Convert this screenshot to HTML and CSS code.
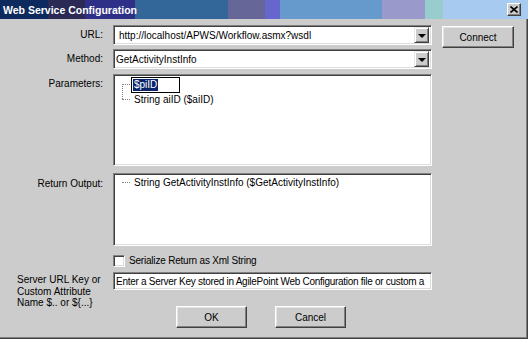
FILE: index.html
```html
<!DOCTYPE html>
<html lang="en">
<head>
  <meta charset="UTF-8">
  <title>Web Service Configuration</title>
  <link rel="stylesheet" href="styles.css">
</head>
<body>
<div class="window">
  <div class="titlebar">
    <span class="title">Web Service Configuration</span>
    <span class="close">
      <svg width="8" height="7" viewBox="0 0 8 7"><path d="M0.5 0.5 L7.5 6.5 M7.5 0.5 L0.5 6.5" stroke="#000" stroke-width="1.6"/></svg>
    </span>
  </div>

  <div class="dialog">
    <!-- URL -->
    <div class="row row-url">
      <div class="lbl">URL:</div>
      <div class="field combo">
        <span class="combo-text url-text">http://localhost/APWS/Workflow.asmx?wsdl</span>
        <span class="drop"><i></i></span>
      </div>
      <button class="btn btn-connect">Connect</button>
    </div>

    <!-- Method -->
    <div class="row row-method">
      <div class="lbl">Method:</div>
      <div class="field combo">
        <span class="combo-text">GetActivityInstInfo</span>
        <span class="drop"><i></i></span>
      </div>
    </div>

    <!-- Parameters -->
    <div class="row row-params">
      <div class="lbl lbl-top lbl-params">Parameters:</div>
      <div class="field tree">
        <div class="branch">
          <div class="node">
            <span class="twig"></span>
            <span class="edit"><span class="sel">$piID</span></span>
          </div>
          <div class="node">
            <span class="twig"></span>
            <span class="node-text">String aiID ($aiID)</span>
          </div>
        </div>
      </div>
    </div>

    <!-- Return -->
    <div class="row row-return">
      <div class="lbl lbl-top lbl-return">Return Output:</div>
      <div class="field tree tree-return">
        <div class="node">
          <span class="twig"></span>
          <span class="node-text">String GetActivityInstInfo ($GetActivityInstInfo)</span>
        </div>
      </div>
    </div>

    <!-- Serialize -->
    <div class="row row-check">
      <div class="lbl"></div>
      <label class="check"><span class="box"></span>Serialize Return as Xml String</label>
    </div>

    <!-- Server key -->
    <div class="row row-server">
      <div class="lbl lbl-server">Server URL Key or<br>Custom Attribute<br>Name $.. or ${...}</div>
      <div class="field input">Enter a Server Key stored in AgilePoint Web Configuration file or custom a</div>
    </div>

    <div class="row row-actions">
      <button class="btn btn-ok">OK</button>
      <button class="btn btn-cancel">Cancel</button>
    </div>
  </div>
</div>
</body>
</html>
```

FILE: styles.css
```css
* {
  box-sizing: border-box;
}

body {
  margin: 0;
  padding: 0;
  font-family: 'Liberation Sans', Arial, sans-serif;
  font-size: 10px;
  color: #000;
  background: #cccccc;
}

.window {
  width: 528px;
  height: 339px;
  background: #cccccc;
  box-shadow: inset -1px -1px #404040, inset -2px -2px #808080;
  overflow: hidden;
}

/* title bar - the odd colour bands come from the palette */
.titlebar {
  height: 19px;
  display: flex;
  align-items: center;
  padding-left: 3px;
  background: linear-gradient(to right,
    #0c2a5e 0, #0c2a5e 48px,
    #2a2a55 48px, #2a2a55 85px,
    #2e3088 85px, #2e3088 135px,
    #336699 135px, #336699 228px,
    #666699 228px, #666699 265px,
    #6666cc 265px, #6666cc 280px,
    #6699cc 280px, #6699cc 382px,
    #9999cc 382px, #9999cc 425px,
    #99cccc 425px, #99cccc 443px,
    #a6caf0 443px, #a6caf0 100%);
}

.title {
  color: #fff;
  font-weight: bold;
  font-size: 10.5px;
}

.close {
  margin-left: auto;
  margin-right: 7px;
  width: 14px;
  height: 13px;
  display: flex;
  align-items: center;
  justify-content: center;
  background: #cccccc;
  border-top: 1px solid #fff;
  border-left: 1px solid #fff;
  border-right: 1px solid #404040;
  border-bottom: 1px solid #404040;
  box-shadow: inset -1px -1px #808080;
}

.dialog {
  display: flex;
  flex-direction: column;
}

.row {
  display: flex;
  align-items: flex-start;
}

.lbl {
  width: 113px;
  flex: none;
  padding-right: 10px;
  text-align: right;
  line-height: 20px;
  white-space: nowrap;
}

.lbl-top {
  line-height: 13px;
}

.lbl-params {
  padding-top: 3px;
}

.lbl-return {
  padding-top: 4px;
}

.lbl-server {
  text-align: left;
  padding-left: 17px;
  padding-top: 2px;
  line-height: 11.6px;
}

/* sunken field */
.field {
  width: 319px;
  flex: none;
  background: #fff;
  border-top: 1px solid #808080;
  border-left: 1px solid #808080;
  border-right: 1px solid #fff;
  border-bottom: 1px solid #fff;
  box-shadow: inset 1px 1px #404040, inset -1px -1px #dcdcdc;
}

.row-url {
  margin-top: 6px;
  height: 20px;
}

.row-method {
  margin-top: 4px;
  height: 20px;
}

.combo {
  height: 20px;
  display: flex;
  align-items: center;
  padding: 2px;
}

.combo-text {
  flex: 1;
  white-space: nowrap;
  overflow: hidden;
}

.url-text {
  padding-left: 3px;
}

.drop {
  width: 15px;
  height: 16px;
  flex: none;
  display: flex;
  align-items: center;
  justify-content: center;
  background: #cccccc;
  border-top: 1px solid #e8e8e8;
  border-left: 1px solid #e8e8e8;
  border-right: 1px solid #404040;
  border-bottom: 1px solid #404040;
  box-shadow: inset 1px 1px #fff, inset -1px -1px #808080;
}

.drop i {
  width: 0;
  height: 0;
  border-left: 4px solid transparent;
  border-right: 4px solid transparent;
  border-top: 4px solid #000;
  margin-top: 1px;
}

/* raised buttons */
.btn {
  font-family: inherit;
  font-size: 10px;
  color: #000;
  background: #cccccc;
  padding: 0;
  border-top: 1px solid #fff;
  border-left: 1px solid #fff;
  border-right: 1px solid #404040;
  border-bottom: 1px solid #404040;
  box-shadow: inset -1px -1px #808080, inset 1px 1px #e4e4e4;
}

.btn-connect {
  margin-left: 10px;
  margin-top: 1px;
  width: 72px;
  height: 22px;
}

/* tree views */
.row-params {
  margin-top: 5px;
}

.tree {
  height: 92px;
  padding: 2px 0 0 8px;
}

.branch {
  position: relative;
}

/* vertical connector between the nodes */
.branch::before {
  content: "";
  position: absolute;
  left: 0;
  top: 7px;
  height: 15px;
  border-left: 1px dotted #808080;
}

.node {
  display: flex;
  align-items: center;
  height: 15px;
  white-space: nowrap;
}

.twig {
  width: 8px;
  flex: none;
  border-top: 1px dotted #808080;
  margin-right: 1px;
}

.node-text {
  padding-left: 3px;
}

.edit {
  width: 49px;
  height: 16px;
  border: 1px solid #000;
  background: #fff;
  padding: 1px 0 0 1px;
  line-height: 12px;
}

.sel {
  display: inline-block;
  background: #0a246a;
  color: #fff;
  padding: 0 1px;
  height: 12px;
}

.row-return {
  margin-top: 7px;
}

.tree-return {
  height: 73px;
  padding-top: 1px;
}

/* checkbox */
.row-check {
  margin-top: 9px;
  height: 12px;
}

.check {
  display: flex;
  align-items: center;
  gap: 4px;
  line-height: 12px;
  letter-spacing: -0.2px;
}

.box {
  width: 12px;
  height: 12px;
  background: #fff;
  border-top: 1px solid #808080;
  border-left: 1px solid #808080;
  border-right: 1px solid #fff;
  border-bottom: 1px solid #fff;
  box-shadow: inset 1px 1px #404040, inset -1px -1px #dcdcdc;
}

/* server key */
.row-server {
  margin-top: 5px;
  height: 18px;
}

.input {
  height: 18px;
  line-height: 15px;
  padding: 1px 2px 0 2px;
  white-space: nowrap;
  overflow: hidden;
  letter-spacing: -0.28px;
}

.row-actions {
  margin-top: 16px;
  padding-left: 176px;
  gap: 28px;
}

.btn-ok,
.btn-cancel {
  width: 71px;
  height: 22px;
}
```
